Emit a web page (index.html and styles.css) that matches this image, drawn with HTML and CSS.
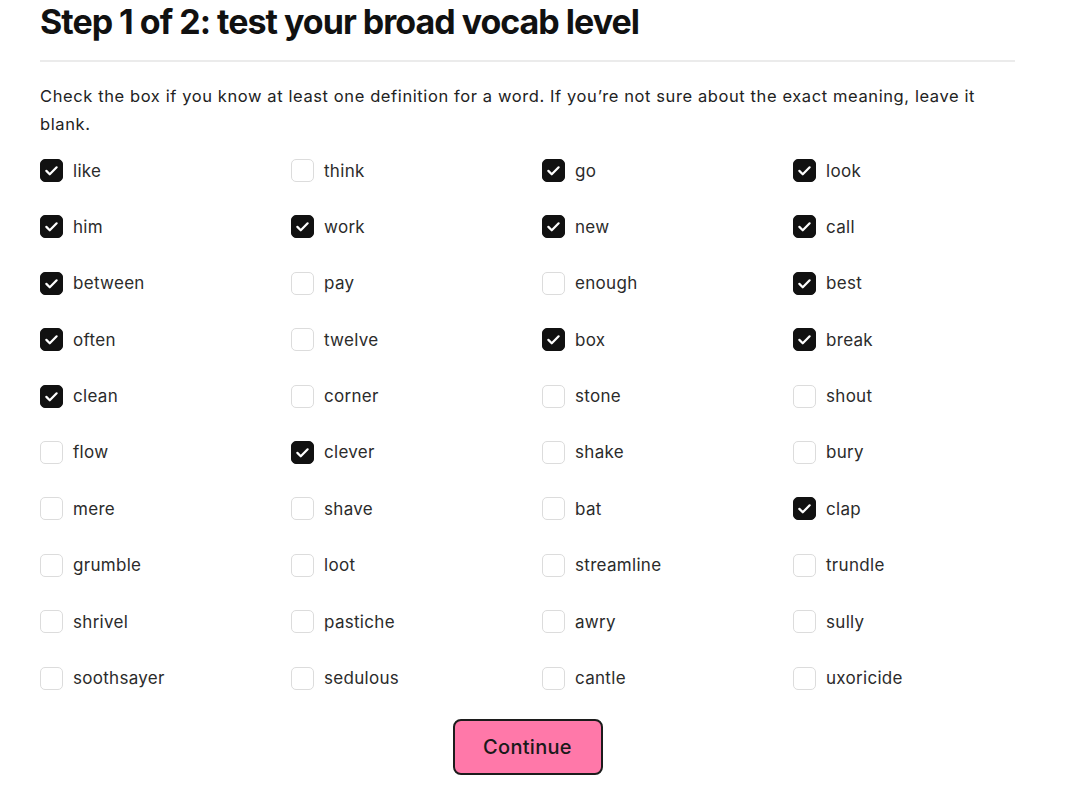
FILE: index.html
```html
<!DOCTYPE html>
<html lang="en">
<head>
<meta charset="utf-8">
<title>Step 1 of 2</title>
<link rel="stylesheet" href="styles.css">
</head>
<body>
<main class="page">
  <h1 class="title">Step 1 of 2: test your broad vocab level</h1>
  <p class="intro">Check the box if you know at least one definition for a word. If you’re not sure about the exact meaning, leave it blank.</p>
  <div class="grid" id="grid"></div>
  <div class="actions"><button class="btn" type="button">Continue</button></div>
</main>
<script src="app.js"></script>
</body>
</html>
```
FILE: app.js
```js
const words = [
  ["like",1],["think",0],["go",1],["look",1],
  ["him",1],["work",1],["new",1],["call",1],
  ["between",1],["pay",0],["enough",0],["best",1],
  ["often",1],["twelve",0],["box",1],["break",1],
  ["clean",1],["corner",0],["stone",0],["shout",0],
  ["flow",0],["clever",1],["shake",0],["bury",0],
  ["mere",0],["shave",0],["bat",0],["clap",1],
  ["grumble",0],["loot",0],["streamline",0],["trundle",0],
  ["shrivel",0],["pastiche",0],["awry",0],["sully",0],
  ["soothsayer",0],["sedulous",0],["cantle",0],["uxoricide",0]
];
const grid = document.getElementById("grid");
const check = '<svg viewBox="0 0 24 24" width="19" height="19"><path d="M5.5 12.5l4.3 4.3L18.5 8" fill="none" stroke="#fff" stroke-width="2.8" stroke-linecap="round" stroke-linejoin="round"/></svg>';
for (const [w, c] of words) {
  const item = document.createElement("label");
  item.className = "item";
  item.innerHTML = '<span class="box' + (c ? ' checked' : '') + '">' + (c ? check : '') + '</span><span class="word">' + w + '</span>';
  item.addEventListener("click", (e) => {
    e.preventDefault();
    const b = item.querySelector(".box");
    const on = b.classList.toggle("checked");
    b.innerHTML = on ? check : "";
  });
  grid.appendChild(item);
}
```
FILE: styles.css
```css
* { box-sizing: border-box; }
html, body { margin: 0; padding: 0; background: #fff; }
body { font-family: "Inter", "Liberation Sans", sans-serif; color: #222; }
.page { width: 1004px; margin: 0 0 0 40px; }
.title {
  margin: 0;
  padding-top: 0;
  font-size: 34px;
  line-height: 44px;
  font-weight: 700;
  letter-spacing: -1px;
  color: #111;
  width: 975px;
  padding-bottom: 16px;
  border-bottom: 2px solid #ebebeb;
}
.intro {
  margin: 20px 0 0;
  width: 975px;
  font-size: 16.5px;
  line-height: 28px;
  letter-spacing: 0.6px;
  color: #222;
}
.grid {
  margin-top: 20.5px;
  display: grid;
  grid-template-columns: repeat(4, 251px);
  row-gap: 32.4px;
}
.item {
  display: flex;
  align-items: center;
  gap: 10px;
  height: 24px;
  cursor: pointer;
}
.box {
  width: 23px;
  height: 23px;
  border: 1.5px solid #dcdcdc;
  border-radius: 5px;
  display: flex;
  align-items: center;
  justify-content: center;
  background: #fff;
  flex: none;
}
.box.checked { background: #111; border-color: #111; }
.word { font-size: 17px; letter-spacing: 0.3px; color: #2b2b2b; }
.actions { width: 975px; display: flex; justify-content: center; margin-top: 29px; }
.btn {
  width: 150px;
  height: 56px;
  background: #ff78a9;
  border: 2px solid #1c1c1c;
  border-radius: 8px;
  font-family: inherit;
  font-size: 20px;
  font-weight: 500;
  letter-spacing: 0.3px;
  color: #1a1a1a;
  cursor: pointer;
}
```
